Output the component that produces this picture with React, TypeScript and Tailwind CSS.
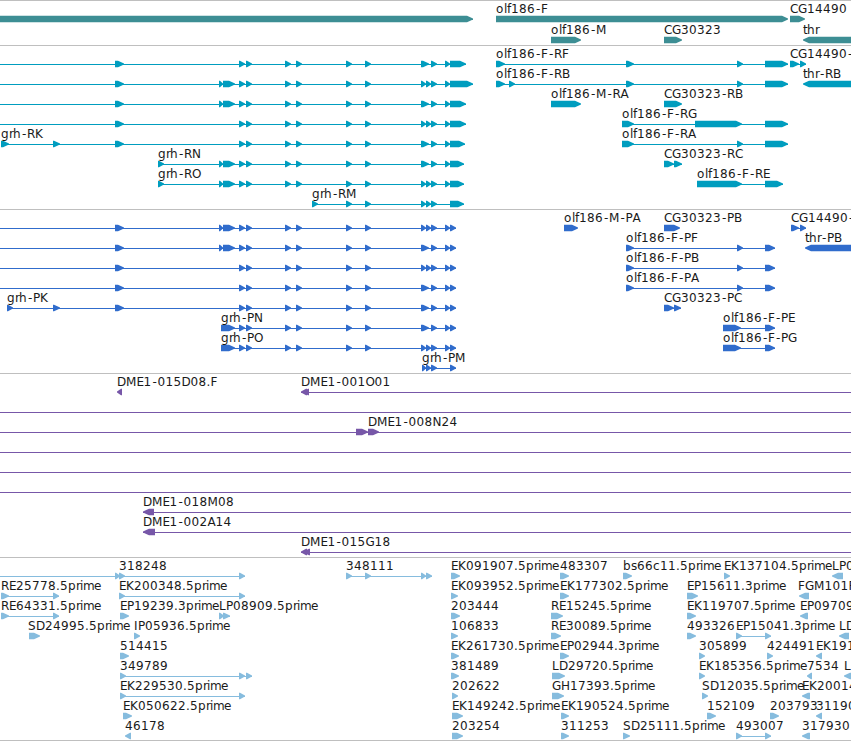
type Box = [number, number];

type Feature = {
  label?: string;
  x?: number;
  line?: Box;
  boxes?: Box[];
  rev?: boolean;
};

type Row = Feature[];

const WIDTH = 851;
const EDGE = 860; // features that run off the right side

// ─── Shared exons ────────────────────────────────────────────────────────────
const exonA: Box[] = [[115, 124]];
const exonB: Box[] = [[219, 223], [223, 235]];
const middle: Box[] = [[239, 245], [246, 252], [285, 291], [296, 302], [346, 352], [365, 371]];
const single: Box[] = [[421, 429], [431, 437], [445, 450]];
const split: Box[] = [[421, 426], [426, 431], [431, 437], [445, 450]];
const lastCds: Box[] = [[450, 456]];

// Forward feature whose intron line spans all its boxes
const f = (label: string, ...boxes: Box[]): Feature => ({ label, boxes });
const r = (label: string, ...boxes: Box[]): Feature => ({ label, boxes, rev: true });
// Continues from beyond the left edge
const open = (...boxes: Box[]): Feature => ({ line: [0, boxes[boxes.length - 1][1]], boxes });
const clone: Feature = { line: [0, WIDTH] };

// ─── Track data ──────────────────────────────────────────────────────────────
const genes: Row[] = [
  [open([-10, 473]), f("olf186-F", [496, 788]), f("CG14490", [790, 805])],
  [f("olf186-M", [551, 581]), f("CG30323", [664, 682]), r("thr", [803, EDGE])],
];

const transcripts: Row[] = [
  [
    open(...exonA, ...middle, ...single, [450, 466]),
    f("olf186-F-RF", [496, 505], [626, 634], [737, 743], [765, 788]),
    f("CG14490-", [790, 799], [800, 806]),
  ],
  [
    open(...exonA, ...exonB, ...middle, ...split, [450, 473]),
    f("olf186-F-RB", [496, 505], [509, 515], [626, 634], [737, 743], [765, 788]),
    r("thr-RB", [803, EDGE]),
  ],
  [
    open(...exonA, ...exonB, ...middle, ...single, [450, 466]),
    f("olf186-M-RA", [551, 581]),
    f("CG30323-RB", [664, 682]),
  ],
  [open(...exonA, ...middle, ...split, [450, 466]), f("olf186-F-RG", [622, 634], [695, 742], [765, 788])],
  [
    f("grh-RK", [1, 9], [53, 60], ...exonA, ...middle, ...single, [450, 465]),
    f("olf186-F-RA", [622, 634], [737, 743], [765, 788]),
  ],
  [
    f("grh-RN", [158, 164], ...exonB, ...middle, ...single, [450, 464]),
    f("CG30323-RC", [664, 674], [674, 682]),
  ],
  [
    f("grh-RO", [158, 164], ...exonB, ...middle, ...split, [450, 464]),
    f("olf186-F-RE", [697, 742], [765, 783]),
  ],
  [f("grh-RM", [312, 318], [346, 352], [365, 371], [421, 426], [426, 431], [431, 437], [450, 464])],
];

const peptides: Row[] = [
  [
    open(...exonA, ...exonB, ...middle, ...split, ...lastCds),
    f("olf186-M-PA", [564, 578]),
    f("CG30323-PB", [664, 680]),
    f("CG14490-", [791, 799], [800, 806]),
  ],
  [
    open(...exonA, ...exonB, ...middle, ...single, ...lastCds),
    f("olf186-F-PF", [626, 634], [737, 743], [765, 775]),
    r("thr-PB", [805, EDGE]),
  ],
  [
    open(...exonA, ...middle, ...split, ...lastCds),
    f("olf186-F-PB", [626, 634], [737, 743], [765, 775]),
  ],
  [
    open(...exonA, ...middle, ...single, ...lastCds),
    f("olf186-F-PA", [626, 634], [737, 743], [765, 775]),
  ],
  [
    f("grh-PK", [7, 13], [53, 60], ...exonA, ...middle, ...single, ...lastCds),
    f("CG30323-PC", [664, 674], [674, 681]),
  ],
  [
    f("grh-PN", [221, 235], ...middle, ...single, ...lastCds),
    f("olf186-F-PE", [723, 741], [765, 775]),
  ],
  [
    f("grh-PO", [221, 235], ...middle, ...split, ...lastCds),
    f("olf186-F-PG", [723, 741], [765, 775]),
  ],
  [f("grh-PM", [422, 426], [426, 431], [431, 437], ...lastCds)],
];

const clones: Row[] = [
  [r("DME1-015D08.F", [117, 122]), { ...r("DME1-001O01", [301, 307], [303, 309]), line: [301, WIDTH] }],
  [clone],
  [{ label: "DME1-008N24", x: 368, line: [0, WIDTH], boxes: [[356, 368], [368, 379]] }],
  [clone],
  [clone],
  [clone],
  [{ ...r("DME1-018M08", [143, 154]), line: [143, WIDTH] }],
  [{ ...r("DME1-002A14", [143, 155]), line: [143, WIDTH] }],
  [{ ...r("DME1-015G18", [301, 307], [303, 310]), line: [301, WIDTH] }],
];

const ests: Row[] = [
  [
    open([115, 120]),
    f("318248", [119, 125], [239, 245]),
    f("348111", [346, 352], [365, 371], [421, 426], [426, 432]),
    f("EK091907.5prime", [451, 460]),
    f("483307", [560, 569]),
    f("bs66c11.5prime", [623, 632]),
    f("EK137104.5prime", [724, 730]),
    r("LP0", [832, 843]),
  ],
  [
    f("RE25778.5prime", [1, 9], [53, 59]),
    f("EK200348.5prime", [119, 125], [239, 245]),
    f("EK093952.5prime", [451, 458]),
    f("EK177302.5prime", [560, 569]),
    f("EP15611.3prime", [687, 698]),
    { ...r("FGM101F", [799, 809]), x: 798 },
  ],
  [
    f("RE64331.5prime", [1, 9], [53, 59]),
    f("EP19239.3prime", [120, 129]),
    f("LP08909.5prime", [219, 224], [223, 230]),
    f("203444", [451, 460]),
    f("RE15245.5prime", [551, 563]),
    f("EK119707.5prime", [687, 696]),
    r("EP09709", [800, 808]),
  ],
  [
    { ...f("SD24995.5prime", [29, 40]), x: 28 },
    f("IP05936.5prime", [134, 140]),
    f("106833", [451, 458]),
    f("RE30089.5prime", [551, 561]),
    f("493326", [687, 696]),
    f("EP15041.3prime", [736, 742], [765, 771]),
    r("LD", [839, 849]),
  ],
  [
    f("514415", [120, 129]),
    f("EK261730.5prime", [451, 459]),
    f("EP02944.3prime", [560, 569]),
    f("305899", [699, 705]),
    f("424491", [767, 773]),
    r("EK191", [816, 822]),
  ],
  [
    f("349789", [120, 126], [239, 245], [246, 252]),
    f("381489", [451, 459]),
    f("LD29720.5prime", [552, 565]),
    f("EK185356.5prime", [699, 705]),
    r("7534", [807, 812]),
    r("L", [844, 852]),
  ],
  [
    f("EK229530.5prime", [120, 126], [239, 245]),
    f("202622", [452, 458]),
    f("GH17393.5prime", [552, 564]),
    f("SD12035.5prime", [702, 708]),
    r("EK20014", [802, 810]),
  ],
  [
    f("EK050622.5prime", [123, 132]),
    f("EK149242.5prime", [452, 463]),
    f("EK190524.5prime", [561, 569]),
    f("152109", [707, 716]),
    f("203793", [770, 779]),
    r("31190", [816, 822]),
  ],
  [
    r("46178", [125, 131]),
    f("203254", [452, 463]),
    f("311253", [561, 569]),
    f("SD25111.5prime", [623, 630]),
    f("493007", [736, 742], [765, 771]),
    r("317930", [802, 810]),
  ],
];

// ─── Glyph drawing ───────────────────────────────────────────────────────────
// Pixel advances for the label face
const advances: Record<string, number> = {
  A: 8, B: 8, C: 8, D: 9, E: 7, F: 7, G: 9, H: 9, I: 4, K: 8, L: 7, M: 10.5, N: 9, O: 9, P: 7, R: 8, S: 8,
  b: 8, c: 7, e: 7, f: 4, g: 8, h: 8, i: 3, l: 3, m: 11, o: 8, p: 8, r: 4, s: 6, t: 4, ".": 4, "-": 6,
};

const positions = (text: string, start: number) => {
  let at = start;
  return text
    .split("")
    .map((ch) => {
      const x = ch === "-" ? at + 1 : at;
      at += advances[ch] ?? 8;
      return x;
    })
    .join(" ");
};

// Six pixels tall with a pointed head; the smallest features are all head
const arrow = ([a, b]: Box, rev?: boolean) => {
  const head = Math.min(6, b - a - 1);
  return rev
    ? `${b},14.8 ${a + head},14.8 ${a},17.6 ${a},18.6 ${a + head},21.2 ${b},21.2`
    : `${a},14.8 ${b - head},14.8 ${b},17.6 ${b},18.6 ${b - head},21.2 ${a},21.2`;
};

const TrackRow = ({ row, className }: { row: Row; className: string }) => (
  <svg className={`block w-full shrink-0 overflow-visible ${className}`}>
    {row.map(({ label, x, line, boxes = [], rev }, i) => {
      const start = boxes.length ? boxes[0][0] : 0;
      const span = line ?? (boxes.length > 1 ? [start, boxes[boxes.length - 1][1]] : null);
      return (
        <g key={i}>
          {span && <rect x={span[0]} y={18} width={span[1] - span[0]} height={1} fill="currentColor" />}
          {boxes.map((box) => (
            <polygon key={box[0]} points={arrow(box, rev)} fill="currentColor" />
          ))}
          {label && (
            <text x={positions(label, x ?? start)} y={12} className="fill-[#1a1a1a]">
              {label}
            </text>
          )}
        </g>
      );
    })}
  </svg>
);

const Track = ({ rows, className, rowClass = "h-5" }: { rows: Row[]; className: string; rowClass?: string }) => (
  <section className={`flex flex-col border-t border-[#bfbfbf] ${className}`}>
    {rows.map((row, i) => (
      <TrackRow key={i} row={row} className={rowClass} />
    ))}
  </section>
);

export default function App() {
  return (
    <main className="flex w-[851px] flex-col overflow-hidden border-b border-[#bfbfbf] bg-white font-['DejaVu_Sans',sans-serif] text-[12px]">
      <Track rows={genes} className="pb-0.5 text-[#3d8e94]" rowClass="h-[21px]" />
      <Track rows={transcripts} className="pb-[3px] text-[#009dbf]" />
      <Track rows={peptides} className="pb-[3px] text-[#306ccc]" />
      <Track rows={clones} className="pb-[3px] text-[#7757a8]" />
      <Track rows={ests} className="pb-0.5 text-[#86bcde]" />
    </main>
  );
}
